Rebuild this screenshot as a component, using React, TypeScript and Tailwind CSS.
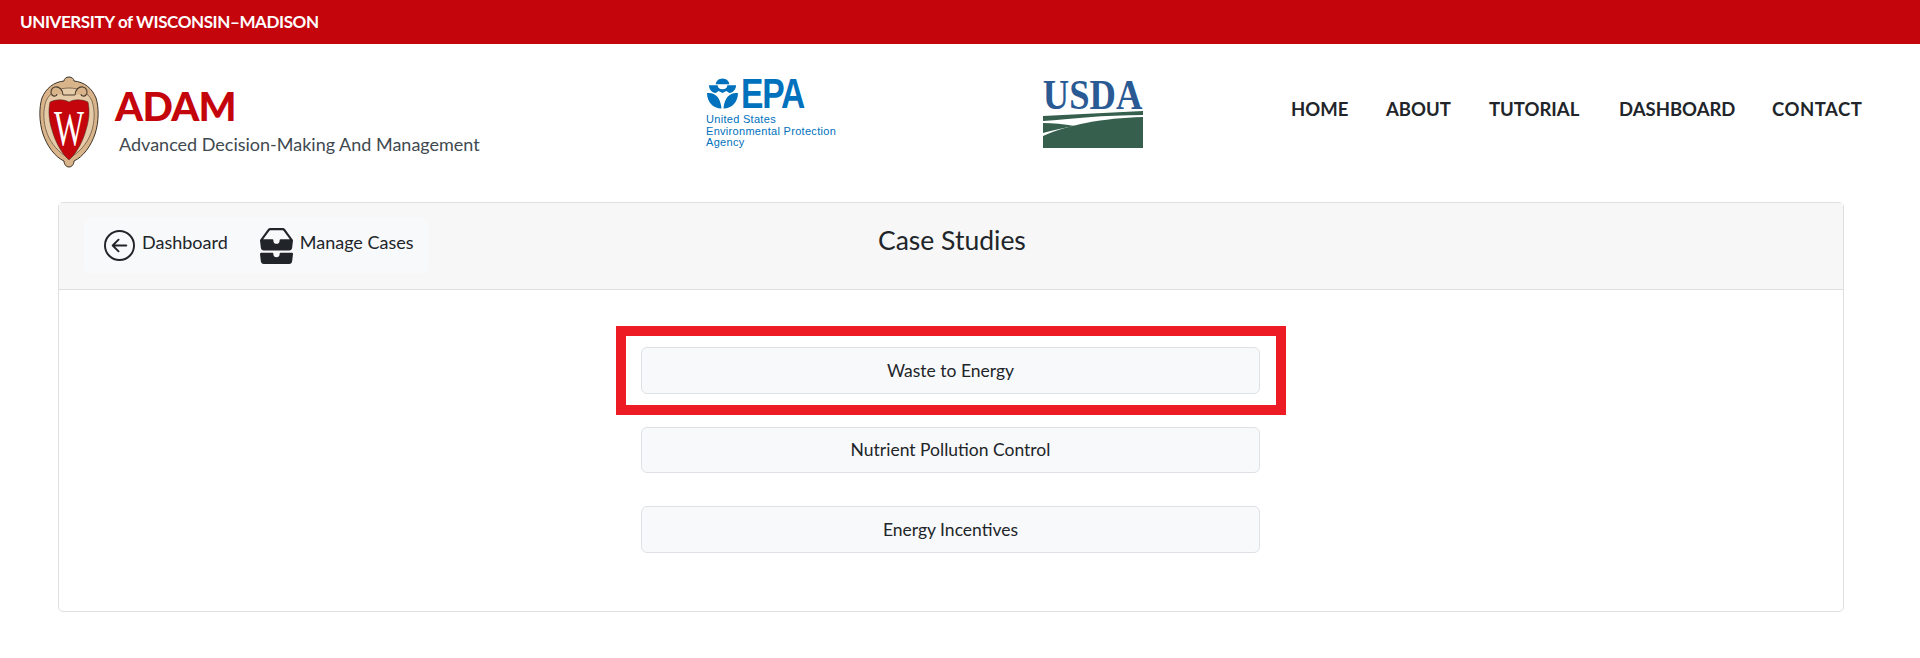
import { BsArrowLeftCircle, BsInboxesFill } from "react-icons/bs";

const NAV_ITEMS = [
  { label: "HOME", className: "w-[57px]" },
  { label: "ABOUT", className: "w-[65px]" },
  { label: "TUTORIAL", className: "w-[92px]" },
  { label: "DASHBOARD", className: "w-[115px]" },
  { label: "CONTACT", className: "w-[91px] tracking-[0.5px]" },
];

const CASES = ["Nutrient Pollution Control", "Energy Incentives"];

function Crest() {
  return (
    <svg viewBox="0 0 60 92" className="h-[92px] w-[60px] shrink-0">
      <path
        d="M30 1c3 0 5 2 5 4 10 1 18 7 22 17 3 9 3 24-1 36-4 12-12 23-21 27 0 3-2 6-5 6s-5-3-5-6C16 81 8 70 4 58 0 46 0 31 3 22 7 12 15 6 25 5c0-2 2-4 5-4z"
        fill="#d9b48a"
        stroke="#3b3226"
        strokeWidth="1"
      />
      <path
        d="M30 12C20 12 11 16 7 25c-3 9-3 21 1 32 4 11 12 20 22 25 10-5 18-14 22-25 4-11 4-23 1-32-4-9-13-13-23-13z"
        fill="#e6cba9"
        stroke="#5a4a38"
        strokeWidth="0.7"
      />
      <path
        d="M24 19c0-5-4-9-8-8-4 1-5 5-3 8 2 2 5 1 5-1M36 19c0-5 4-9 8-8 4 1 5 5 3 8-2 2-5 1-5-1M24 19h12"
        fill="#d9b48a"
        stroke="#4a3d2e"
        strokeWidth="1.1"
      />
      <path
        d="M30 26c5-3 13-3 19 0 2 9 1 19-2 28-3 11-9 23-17 30-8-7-14-19-17-30-3-9-4-19-2-28 6-3 14-3 19 0z"
        fill="#c5050c"
        stroke="#3b3226"
        strokeWidth="0.5"
      />
      <text
        x="0"
        y="0"
        transform="translate(30 69) scale(0.86 1.38)"
        textAnchor="middle"
        fontFamily="'Liberation Serif', serif"
        fontSize="37"
        fill="#fff"
      >
        W
      </text>
    </svg>
  );
}

function EpaLogo() {
  return (
    <div className="flex w-[132px] flex-col font-['Liberation_Sans',sans-serif] text-[#0071bc]">
      <div className="flex h-[31px] items-center gap-[3px]">
        <svg viewBox="0 0 32 31" className="h-[31px] w-[31px] shrink-0">
          <path d="M9 6c0-3 3-6 7-6s7 3 7 6z" fill="#0071bc" />
          <path d="M2 7h9c0 3 2 4 5 4s5-1 5-4h9c0 4-3 8-7 8l-3-2-4 2-4-2-3 2c-4 0-7-4-7-8z" fill="#0071bc" />
          <path d="M0 15c8-1 14 4 15 16C6 31 0 24 0 15zM32 15c-8-1-14 4-15 16 9 0 15-7 15-16z" fill="#0071bc" />
        </svg>
        <span className="origin-left scale-x-[0.8] text-[42px] leading-none font-bold tracking-[-1.5px]">EPA</span>
      </div>
      <div className="mt-[5px] -ml-[1px] whitespace-nowrap text-[11px] leading-[11.5px] tracking-[0.3px]">
        United States
        <br />
        Environmental Protection
        <br />
        Agency
      </div>
    </div>
  );
}

function UsdaLogo() {
  return (
    <div className="flex w-[100px] flex-col items-center">
      <span className="h-[33px] scale-x-[0.85] whitespace-nowrap font-['Liberation_Serif',serif] text-[43px] leading-[33px] font-bold text-[#2a5a94]">
        USDA
      </span>
      <svg viewBox="0 0 100 37" className="h-[37px] w-[100px]">
        <path d="M0 5 100 0v4C60 4 28 8 0 10z" fill="#365f4e" />
        <path d="M0 12c10 0 20 1 32 3-12 2-22 4-32 7z" fill="#365f4e" />
        <path d="M0 25C24 14 60 7 100 6v31H0z" fill="#365f4e" />
      </svg>
    </div>
  );
}

export default function App() {
  return (
    <div className="min-h-[658px] bg-white font-['Lato',sans-serif] text-[#212529]">
      <div className="flex h-[44px] items-center whitespace-pre bg-[#c5050c] pl-[20px] text-[17px] font-bold tracking-[-0.4px] text-white">
        UNIVERSITY of WISCONSIN–MADISON
      </div>

      <header className="flex h-[158px] items-start">
        <div className="ml-[39px] mt-[32px]">
          <Crest />
        </div>
        <div className="ml-[16px] mt-[40px] w-[592px] shrink-0">
          <div className="h-[44px] text-[40px] leading-[44px] font-black tracking-[-0.7px] text-[#c5050c]">ADAM</div>
          <div className="ml-[4px] mt-[4px] text-[18px] leading-[24px] text-[#40494f]">
            Advanced Decision-Making And Management
          </div>
        </div>
        <div className="mt-[34px] w-[336px] shrink-0">
          <EpaLogo />
        </div>
        <div className="mt-[34px] shrink-0">
          <UsdaLogo />
        </div>
        <nav className="ml-[148px] mt-[52px] flex gap-[38px] text-[18.5px] leading-[26px] font-bold text-[#212529]">
          {NAV_ITEMS.map((item) => (
            <span key={item.label} className={`${item.className} whitespace-nowrap`}>
              {item.label}
            </span>
          ))}
        </nav>
      </header>

      <section className="mx-[58px] w-[1786px] rounded-[5px] border border-[#dfdfdf]">
        <div className="relative flex h-[87px] border-b border-[#dfdfdf] bg-[#f7f7f7] pl-[25px] pt-[15px]">
          <div className="flex h-[55px] w-[345px] items-center rounded-[6px] bg-[#f8f9fa] pl-[20px] text-[18px]">
            <BsArrowLeftCircle className="h-[31px] w-[31px] text-[#212529]" />
            <span className="ml-[7px] -mt-[6px]">Dashboard</span>
            <BsInboxesFill preserveAspectRatio="none" className="ml-[32px] h-[36px] w-[33px] text-[#212529]" />
            <span className="ml-[7px] -mt-[6px]">Manage Cases</span>
          </div>
          <h1 className="ml-[449px] mt-[6px] text-[26.5px] leading-[32px] font-normal">Case Studies</h1>
        </div>

        <div className="flex flex-col items-center gap-[33px] pb-[58px] pr-[1px] pt-[57px]">
          <div className="relative w-[619px]">
            <button className="h-[46.5px] w-full rounded-[6px] border border-[#dee2e6] bg-[#f8f9fa] pt-[1px] text-[17.5px]">
              Waste to Energy
            </button>
            <div className="pointer-events-none absolute -inset-x-[25.5px] -inset-y-[21px] border-[10px] border-[#ed1c24]" />
          </div>
          {CASES.map((name) => (
            <button
              key={name}
              className="h-[46.5px] w-[619px] rounded-[6px] border border-[#dee2e6] bg-[#f8f9fa] pt-[1px] text-[17.5px]"
            >
              {name}
            </button>
          ))}
        </div>
      </section>
    </div>
  );
}
